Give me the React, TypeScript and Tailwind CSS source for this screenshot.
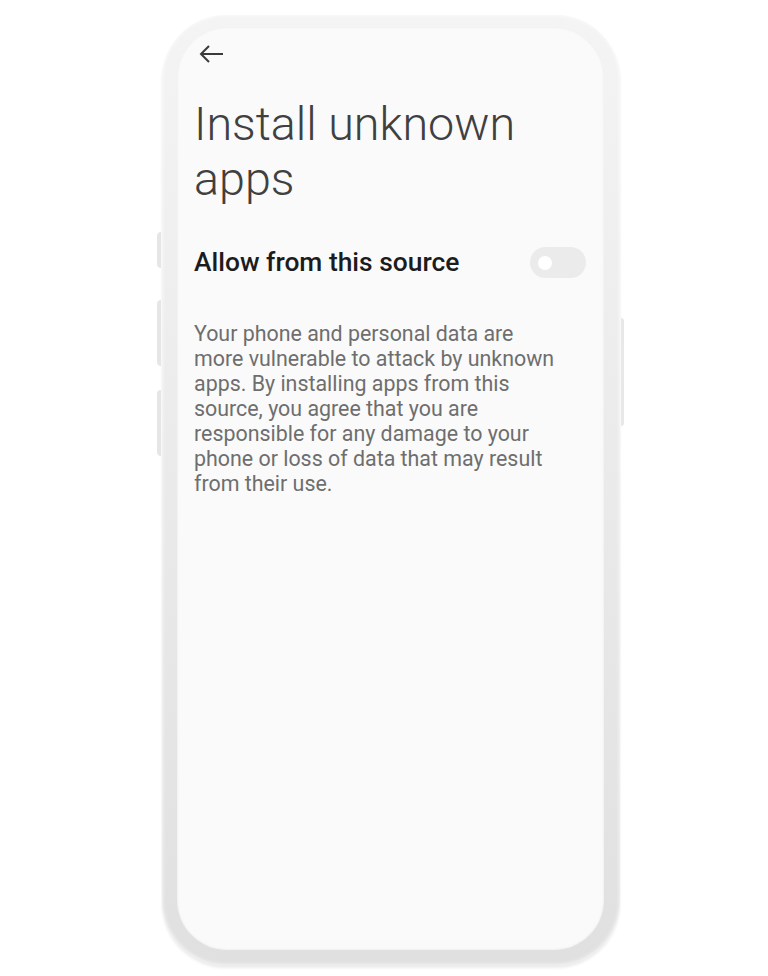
export default function App() {
  return (
    <div className="min-h-[976px] w-full bg-white font-['Roboto',sans-serif]">
      <div className="relative ml-[162px] pt-[15px] w-[458px]">
        {/* side buttons */}
        <div className="absolute left-[-5px] top-[232px] h-[36px] w-[4px] rounded-l-sm bg-[#e6e6e6]" />
        <div className="absolute left-[-5px] top-[300px] h-[66px] w-[4px] rounded-l-sm bg-[#e6e6e6]" />
        <div className="absolute left-[-5px] top-[390px] h-[66px] w-[4px] rounded-l-sm bg-[#e6e6e6]" />
        <div className="absolute right-[-4px] top-[318px] h-[108px] w-[3px] rounded-r-sm bg-[#e8e8e8]" />

        <div className="h-[950px] rounded-[64px] bg-gradient-to-b from-[#f4f4f4] to-[#e0e0e0] p-[12px] pl-[15px] pr-[16px] pb-[15px] shadow-[0_3px_3px_rgba(0,0,0,0.08),inset_0_0_4px_rgba(255,255,255,0.9)]">
          <div className="flex h-full flex-col rounded-[50px] bg-[#fafafa] px-[17px] pt-[16px] shadow-[inset_0_0_3px_rgba(0,0,0,0.08)]">
            <svg width="28" height="22" viewBox="0 0 28 22" className="ml-[3px] text-[#3a3a3a]">
              <path d="M26 11H4M12 3L4 11L12 19" fill="none" stroke="currentColor" strokeWidth="2" />
            </svg>
            <h1 className="mt-[32px] text-[46.7px] font-light leading-[55px] text-[#404040]">
              Install unknown
              <br />
              apps
            </h1>
            <div className="mt-[36px] flex items-center justify-between">
              <span className="text-[26.4px] font-medium text-[#1c1c1c]">Allow from this source</span>
              <div className="mr-[1px] flex h-[31px] w-[56px] items-center rounded-full bg-[#ebebeb] pl-[8px]">
                <div className="h-[14px] w-[14px] rounded-full bg-white" />
              </div>
            </div>
            <p className="mt-[38px] pr-[30px] text-[21.4px] leading-[25px] text-[#6e6e6e]">
              Your phone and personal data are more vulnerable to attack by unknown apps. By installing apps from this
              source, you agree that you are responsible for any damage to your phone or loss of data that may result
              from their use.
            </p>
          </div>
        </div>
      </div>
    </div>
  );
}
